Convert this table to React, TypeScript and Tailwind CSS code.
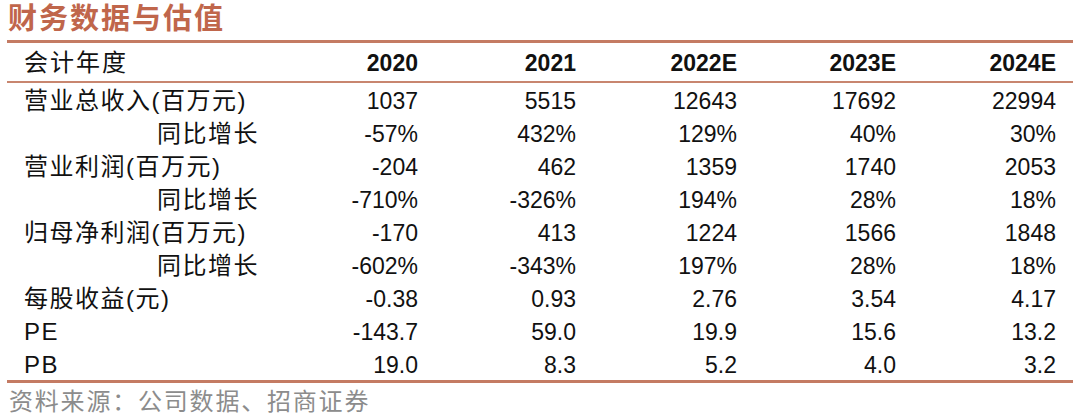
const years = ["2020", "2021", "2022E", "2023E", "2024E"]

const rows: { label: string; sub?: boolean; values: string[] }[] = [
  { label: "营业总收入(百万元)", values: ["1037", "5515", "12643", "17692", "22994"] },
  { label: "同比增长", sub: true, values: ["-57%", "432%", "129%", "40%", "30%"] },
  { label: "营业利润(百万元)", values: ["-204", "462", "1359", "1740", "2053"] },
  { label: "同比增长", sub: true, values: ["-710%", "-326%", "194%", "28%", "18%"] },
  { label: "归母净利润(百万元)", values: ["-170", "413", "1224", "1566", "1848"] },
  { label: "同比增长", sub: true, values: ["-602%", "-343%", "197%", "28%", "18%"] },
  { label: "每股收益(元)", values: ["-0.38", "0.93", "2.76", "3.54", "4.17"] },
  { label: "PE", values: ["-143.7", "59.0", "19.9", "15.6", "13.2"] },
  { label: "PB", values: ["19.0", "8.3", "5.2", "4.0", "3.2"] },
]

const grid = "grid grid-cols-[253px_158px_158px_161px_159px_160px]"

export default function App() {
  return (
    <div className="w-[1080px] h-[417px] bg-white overflow-hidden font-['Liberation_Sans','Noto_Sans_CJK_SC',sans-serif] text-[#111]">
      <div className="h-[40px] pl-[8px] pt-[1px] text-[29px] leading-[36px] font-semibold text-[#c0664b] tracking-[2px]">
        财务数据与估值
      </div>

      <div className="ml-[7px] w-[1066px]">
        <div className="h-[3px] bg-[#c47b63]" />

        {/* 表头 */}
        <div className={`${grid} h-[38px] items-center`}>
          <div className="pl-[17px] text-[24px] tracking-[2px] pt-[2px]">会计年度</div>
          {years.map((y) => (
            <div key={y} className="text-right text-[23px] font-bold pt-[2px]">
              {y}
            </div>
          ))}
        </div>
        <div className="h-[2px] bg-[#c8866f]" />

        {/* 数据 */}
        {rows.map((r, i) => (
          <div key={i} className={`${grid} h-[33px] items-center`}>
            <div className={`${r.sub ? "pl-[150px]" : "pl-[17px]"} text-[24px] tracking-[1.5px] whitespace-nowrap`}>
              {r.label}
            </div>
            {r.values.map((v, j) => (
              <div key={j} className="text-right text-[23px]">
                {v}
              </div>
            ))}
          </div>
        ))}

        <div className="h-[3px] bg-[#c47b63]" />
      </div>

      <div className="pl-[9px] pt-[4px] text-[24px] leading-[30px] text-[#8c8c8c] tracking-[1.8px]">
        资料来源：公司数据、招商证券
      </div>
    </div>
  )
}
